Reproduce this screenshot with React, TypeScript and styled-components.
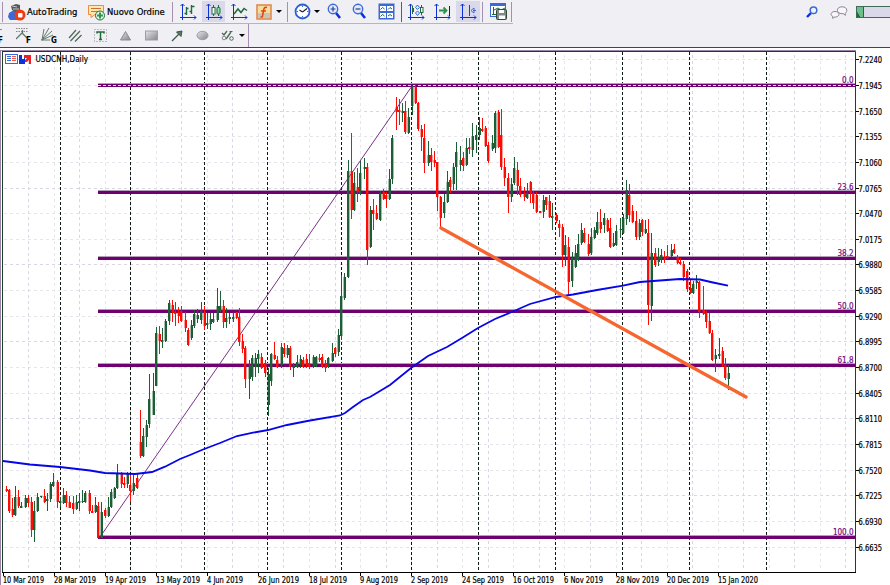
import React from "react";
import styled, { createGlobalStyle } from "styled-components";

const GlobalStyle = createGlobalStyle`
  html, body { margin: 0; padding: 0; overflow: hidden; }
  * { box-sizing: border-box; }
`;

const FONT = '"DejaVu Sans Condensed", "DejaVu Sans", "Liberation Sans", sans-serif';

const Terminal = styled.div`
  width: 890px;
  height: 585px;
  display: flex;
  flex-direction: column;
  background: #f0eff3;
  font-family: ${FONT};
  color: #000;
  overflow: hidden;
`;

const TopBar = styled.header`
  height: 24px;
  display: flex;
  justify-content: space-between;
`;

const ToolGroup = styled.div<{ $w: number }>`
  width: ${(p) => p.$w}px;
  height: 24px;
  display: flex;
  align-items: center;
  border-bottom: 1px solid #b9b3bd;
`;

const DrawBar = styled.div`
  height: 23px;
  width: 249px;
  display: flex;
  align-items: center;
  border-right: 1px solid #a58fb0;
`;

const Slot = styled.div<{ $w: number; $ml?: number; $active?: boolean }>`
  width: ${(p) => p.$w}px;
  height: ${(p) => (p.$active ? 21 : 22)}px;
  margin-left: ${(p) => p.$ml ?? 0}px;
  flex: none;
  display: flex;
  align-items: center;
  justify-content: center;
  background: ${(p) => (p.$active ? "#dad9ec" : "transparent")};
`;

const LabelButton = styled.div<{ $w: number; $size: number }>`
  width: ${(p) => p.$w}px;
  height: 22px;
  flex: none;
  display: flex;
  align-items: center;
  gap: 1px;
  padding-left: 2px;
  font-size: ${(p) => p.$size}px;
  line-height: 12px;
  white-space: nowrap;
  -webkit-text-stroke: 0.2px #000;
`;

const Separator = styled.i<{ $ml: number; $mr: number; $c?: string }>`
  width: 1px;
  height: 20px;
  flex: none;
  margin-left: ${(p) => p.$ml}px;
  margin-right: ${(p) => p.$mr}px;
  background: ${(p) => p.$c ?? "#a58fb0"};
`;

const Caret = styled.i<{ $ml: number; $mr: number }>`
  flex: none;
  width: 6px;
  height: 3px;
  margin-left: ${(p) => p.$ml}px;
  margin-right: ${(p) => p.$mr}px;
  border: 3px solid transparent;
  border-top-color: #000;
  border-bottom: 0;
`;

const StatusGroup = styled.div`
  display: flex;
  align-items: center;
  height: 24px;
`;

const Gauge = styled.div`
  width: 34px;
  height: 12px;
  margin-left: 8px;
  border: 1px solid #3d6b57;
  border-right: 0;
  background: #dad9ea;
  display: flex;
`;

const GaugeFill = styled.div`
  width: 7px;
  background: linear-gradient(60deg, #1f6b3c 0 25%, #6cbf88 30%);
  border-right: 1px solid #1f6b3c;
`;

const ChartPane = styled.main`
  height: 538px;
  border-top: 1px solid #1f5a34;
  background: #fff;
`;

const ChartSvg = styled.svg`
  display: block;
  font-family: ${FONT};
`;

const AxisText = styled.text`
  font-size: 8px;
  fill: #000;
  stroke: #000;
  stroke-width: 0.2px;
`;

const LevelText = styled.text`
  font-size: 8px;
  fill: #760a7c;
  stroke: #760a7c;
  stroke-width: 0.2px;
  text-anchor: end;
`;

const Icon = styled.svg`
  display: block;
  flex: none;
`;

const B = "#0a32d8";
const L = "#3a6ad8";
const G = "#1f6b3c";

const Axes = () => (
  <path d="M3.5 1v16M1 14.5h16M1.5 3l2-2 2 2M15 12.5l2 2-2 2" fill="none" stroke={B} />
);

const AutoIcon = () => (
  <Icon width="18" height="18" viewBox="0 0 18 18">
    <path d="M1 10l5-3 6 2 1 8H2L0 14z" fill={L} />
    <path d="M3 3l5-2 4 1v6l-4 1-4-2z" fill="#55585a" />
    <path d="M4 3l5 1M5 6h6" stroke="#c8c8c8" />
    <circle cx="12" cy="12" r="5.5" fill="#f23a12" />
    <rect x="10" y="10" width="4.5" height="4.5" rx="1" fill="#fff" />
  </Icon>
);
const OrderIcon = () => (
  <Icon width="18" height="18" viewBox="0 0 18 18">
    <path d="M.5 2.5h15v9H7l-4 3v-3H.5z" fill="#ffe7b0" stroke="#f08a3c" />
    <path d="M3 5.5h10M3 8.5h9" stroke="#c8742c" />
    <circle cx="12" cy="12.5" r="4.5" fill="#e6f5e8" stroke={G} />
    <path d="M12 9.5v6M9 12.5h6" stroke="#2c9a4a" strokeWidth="2" />
  </Icon>
);
const BarsIcon = () => (
  <Icon width="18" height="18" viewBox="0 0 18 18">
    <Axes />
    <path d="M7.5 4v8M5.5 10.5h2M7.5 5.5h2M12.5 2v9M10.5 8.5h2M12.5 3.5h3" stroke={G} strokeWidth="1.4" fill="none" />
  </Icon>
);
const CandlesIcon = () => (
  <Icon width="18" height="18" viewBox="0 0 18 18">
    <Axes />
    <path d="M8.5 2v11M13.5 2v11" stroke={G} />
    <rect x="7" y="4.5" width="3" height="6.5" fill="#fff" stroke={G} />
    <rect x="12" y="4.5" width="3" height="6.5" rx="1" fill="#8fe0a6" stroke={G} />
  </Icon>
);
const LineIcon = () => (
  <Icon width="18" height="18" viewBox="0 0 18 18">
    <Axes />
    <path d="M4 11l4-5 3 3.5 3-4 3 2" stroke={G} strokeWidth="1.5" fill="none" />
  </Icon>
);
const FunctionIcon = () => (
  <Icon width="16" height="16" viewBox="0 0 16 16">
    <rect x="1" y="1" width="14" height="14" fill="#f4dda0" stroke="#e08a50" strokeWidth="1.6" />
    <path d="M2 9h12v5H2z" fill="#c8c4bc" />
    <path d="M11 3.5c-2-.8-3 .4-3.3 2.5L6.5 12c-.3 1-1.2 1.3-2 1M5 7h5" stroke="#e4430c" strokeWidth="1.5" fill="none" />
  </Icon>
);
const ClockIcon = () => (
  <Icon width="17" height="17" viewBox="0 0 17 17">
    <circle cx="8.5" cy="8.5" r="7" fill="#fff" stroke="#2f5fd4" strokeWidth="1.8" />
    <path d="M8.5 9L13 5.5M8.5 9l-3-2" stroke="#222" strokeWidth="1.2" />
    <path d="M8.5 2.5v1.5M8.5 13v1.5M2.5 8.5H4M13 8.5h1.5" stroke={L} />
  </Icon>
);
const ZoomIcon = ({ plus }: { plus?: boolean }) => (
  <Icon width="15" height="17" viewBox="0 0 15 17">
    <path d="M9 10l4 5" stroke={B} strokeWidth="2.6" />
    <circle cx="6" cy="6" r="4.7" fill="#e3e9fb" stroke={L} strokeWidth="1.4" />
    <path d={plus ? "M3.5 6h5M6 3.5v5" : "M3.5 6h5"} stroke="#27408f" strokeWidth="1.2" />
  </Icon>
);
const TileIcon = () => (
  <Icon width="17" height="17" viewBox="0 0 17 17">
    <rect x=".5" y=".5" width="16" height="16" fill={L} />
    <path d="M2 3h6v5H2zM9 3h6v5H9zM2 10h6v5H2zM9 10h6v5H9z" fill="#fff" />
    <path d="M2.5 6.5l2-2 2 1.5M10 6.5l2-2 2 1.5M2.5 13.5l2-2 2 1.5M10 13l2-1.5 2 1.5" stroke={G} fill="none" />
  </Icon>
);
const ShiftIcon = ({ kind }: { kind: "scale" | "scroll" | "shift" }) => (
  <Icon width="18" height="18" viewBox="0 0 18 18">
    <Axes />
    {kind === "scale" && (
      <>
        <path d="M5.5 3v8M14.5 2v10" stroke={G} />
        <rect x="5" y="5" width="2" height="4" fill={G} />
        <rect x="13.5" y="4.5" width="2.5" height="5" fill="#fff" stroke={G} />
        <path d="M10.5 2l2 2.500-2 2-2-2zM10.500 8l2 2-2 2.500-2-2.500z" fill="#dfe8ff" stroke={L} />
      </>
    )}
    {kind === "scroll" && (
      <>
        <path d="M16.5 3v10" stroke="#222" />
        <path d="M6 7.5h6M10.5 4.5l3 3-3 3" stroke="#2f8f4c" strokeWidth="1.8" fill="none" />
      </>
    )}
    {kind === "shift" && (
      <>
        <path d="M10.5 2v11" stroke="#444" />
        <path d="M17 7.5h-3M15 5l-3 2.5 3 2.5z" stroke={L} fill="#e6eeff" />
      </>
    )}
  </Icon>
);
const TemplateIcon = () => (
  <Icon width="17" height="17" viewBox="0 0 17 17">
    <rect x=".5" y=".5" width="15" height="13" fill="#fff" stroke={L} />
    <path d="M0 1.5h16" stroke={L} strokeWidth="3" />
    <path d="M3.5 4v8M2 11.5h4M4 7l4-2 3 2 4-2" stroke={G} fill="none" />
    <rect x="6.5" y="6.5" width="10" height="10" rx="1" fill="#7f8b85" stroke="#33483c" />
    <path d="M9 7h5v3H9zM9 12.5h6V16H9z" fill="#fff" />
  </Icon>
);
const SearchIcon = () => (
  <Icon width="12" height="12" viewBox="0 0 12 12">
    <path d="M5 7L1 11" stroke={B} strokeWidth="2.4" />
    <circle cx="7.5" cy="4.2" r="3.3" fill="#eef2ff" stroke={L} strokeWidth="1.5" />
  </Icon>
);
const ChatIcon = () => (
  <Icon width="18" height="13" viewBox="0 0 18 13">
    <path d="M12 .8c3 0 4.8 1.4 4.8 3.6 0 1.4-.8 2.4-1.8 2.9l.5 2-2.3-1.6c-3.2.2-5.8-1-5.8-3.3C7.4 2.2 9.2.8 12 .8z" fill="#f8f8fa" stroke="#8f8496" />
    <path d="M5 5.5c2.4 0 4 1.2 4 2.7S7.4 11 5 11l-2.5 1.3.5-1.8C1.7 10 1 9.2 1 8.2c0-1.5 1.6-2.7 4-2.7z" fill="#f8f8fa" stroke="#8f8496" />
  </Icon>
);

const Letter = ({ x, y, children }: { x: number; y: number; children: string }) => (
  <text x={x} y={y} fontSize="8" fontWeight="bold" fill="#000">{children}</text>
);
const FanIcon = ({ kind }: { kind: "F" | "G" }) => (
  <Icon width="17" height="17" viewBox="0 0 17 17">
    {kind === "F" ? (
      <>
        <path d="M0 1.500h12M0 4.500h12" stroke="#8a8a8a" strokeDasharray="1.5 1" />
        <path d="M0 12l6-6 5 5M6.500 3v4" stroke="#607a6c" strokeWidth="1.3" fill="none" />
      </>
    ) : (
      <path d="M1 13L3 2M1 13L8 1M1 13l10-9M1 13l11-5M0 13h9" stroke="#607a6c" />
    )}
    <Letter x={10} y={16}>{kind}</Letter>
  </Icon>
);
const ChannelIcon = () => (
  <Icon width="14" height="13" viewBox="0 0 14 13">
    <path d="M1 9l7-8M2.5 12L12 2M7 12.5L13.5 6" stroke="#4f6b5a" strokeWidth="1.3" />
  </Icon>
);
const TextIcon = () => (
  <Icon width="13" height="13" viewBox="0 0 13 13">
    <rect x=".5" y=".5" width="12" height="12" fill="none" stroke="#8a8a8a" strokeDasharray="1 2" />
    <path d="M3 4.500V3h7v1.500M6.500 3v7M5 10.500h3" stroke={G} strokeWidth="1.5" fill="none" />
  </Icon>
);
const ShapeIcon = ({ kind }: { kind: "triangle" | "rect" | "ellipse" }) => (
  <Icon width="13" height="11" viewBox="0 0 13 11">
    <defs>
      <linearGradient id={`metal-${kind}`} x1="0" y1="0" x2="1" y2="1">
        <stop offset="0" stopColor="#e6e6ea" />
        <stop offset="1" stopColor="#858589" />
      </linearGradient>
    </defs>
    {kind === "triangle" && <path d="M6.5 1.5l5 8.500h-10z" fill={`url(#metal-${kind})`} stroke="#8f8794" />}
    {kind === "rect" && <rect x=".5" y="1" width="12" height="9" fill={`url(#metal-${kind})`} stroke="#a199a8" />}
    {kind === "ellipse" && <ellipse cx="6.5" cy="5.5" rx="5.5" ry="4.2" fill={`url(#metal-${kind})`} stroke="#a199a8" />}
  </Icon>
);
const ArrowIcon = () => (
  <Icon width="12" height="12" viewBox="0 0 12 12">
    <path d="M1 11l7-7" stroke="#3e5548" strokeWidth="1.3" />
    <path d="M5.5 2L11 1l-1 5.500z" fill="#5b7466" stroke="#3e5548" />
  </Icon>
);
const SymbolsIcon = () => (
  <Icon width="13" height="13" viewBox="0 0 13 13">
    <path d="M1 4l2 2 3-4M5 10l5-7" stroke="#4f6b5a" strokeWidth="1.4" fill="none" />
    <circle cx="3" cy="9" r="1.8" fill="none" stroke="#888" />
    <circle cx="10.5" cy="9.500" r="1.8" fill="none" stroke="#4f6b5a" />
    <path d="M8.500 2.500h3" stroke="#4f6b5a" />
  </Icon>
);

/* Each bar: [high, body top, body bottom, low, 1 = bullish / 0 = bearish] in pane pixels. */
type Bar = [number, number, number, number, 0 | 1];
const BARS: Bar[] = [
  [486,489,491,492,0],[489,490,511,513,0],[498,509,515,517,0],[486,497,515,516,1],[490,497,506,508,0],
  [502,506,508,508,1],[495,498,507,508,1],[495,498,503,507,0],[497,502,530,537,0],[501,511,530,542,1],
  [493,497,511,512,1],[496,496,497,498,1],[489,496,502,503,0],[493,499,501,511,1],[482,484,499,502,1],
  [473,482,486,487,1],[480,482,502,508,0],[497,501,503,507,1],[488,495,503,504,1],[491,495,503,507,0],
  [496,502,508,508,0],[496,503,509,514,0],[495,502,509,510,1],[493,501,503,511,1],[490,501,502,503,1],
  [491,493,502,503,1],[490,493,511,514,0],[505,511,513,513,0],[497,505,512,513,1],[502,506,538,538,0],
  [502,512,538,538,1],[508,510,516,518,0],[497,507,516,517,1],[489,492,507,508,1],[487,488,498,499,1],
  [464,473,488,489,1],[472,473,484,488,0],[477,483,485,488,0],[472,474,484,488,1],[475,485,491,502,0],
  [475,483,491,495,1],[473,478,488,489,0],[410,442,456,458,0],[428,436,456,457,1],[420,425,437,447,1],
  [374,399,424,428,1],[373,391,415,415,1],[327,333,386,386,1],[326,334,341,354,0],[328,340,342,348,1],
  [319,321,341,342,1],[300,303,321,325,1],[300,305,312,322,0],[302,312,314,326,0],[307,313,316,323,0],
  [306,311,321,322,0],[312,320,328,332,0],[328,330,345,346,0],[320,325,338,340,1],[310,314,326,328,1],
  [309,315,319,323,1],[302,311,320,324,1],[306,312,326,330,0],[313,323,325,329,1],[313,319,324,330,1],
  [313,319,322,323,1],[288,306,320,322,1],[291,306,311,312,1],[300,306,322,328,0],[308,318,322,328,1],
  [313,317,319,324,1],[312,317,319,322,1],[312,312,318,319,0],[308,317,342,346,0],[334,341,349,353,0],
  [346,348,379,388,0],[360,365,379,399,1],[355,358,377,381,1],[353,358,367,377,1],[350,354,359,373,1],
  [353,357,368,369,0],[360,363,373,377,0],[368,374,405,416,1],[353,354,381,386,1],[342,355,359,360,0],
  [356,360,367,368,0],[343,347,365,368,1],[343,348,354,357,0],[345,348,355,358,1],[346,348,367,370,0],
  [363,365,368,377,1],[355,362,367,368,1],[355,359,365,368,1],[357,360,367,368,0],[354,359,365,368,0],
  [354,363,367,369,0],[355,357,367,368,1],[356,357,366,367,1],[354,358,360,362,0],[354,357,367,368,0],
  [360,363,368,372,0],[357,358,367,368,1],[343,353,361,362,1],[347,348,354,357,0],[329,335,352,356,1],
  [275,296,336,340,1],[273,277,298,300,1],[160,171,277,278,1],[133,171,210,219,0],[172,183,210,211,1],
  [168,187,192,202,0],[161,173,194,195,1],[158,167,169,179,1],[163,167,250,265,0],[206,210,247,248,1],
  [199,210,214,230,0],[205,213,219,220,0],[191,193,220,221,1],[189,192,199,200,0],[192,195,199,208,0],
  [169,179,199,200,1],[135,138,179,184,1],[97,107,112,130,0],[99,110,112,125,0],[103,111,113,122,1],
  [101,111,132,134,0],[108,117,133,134,1],[86,87,106,115,1],[85,87,103,104,0],[102,103,129,131,0],
  [125,129,137,151,0],[124,138,163,173,0],[141,155,163,166,1],[148,155,162,171,0],[151,160,163,167,0],
  [162,162,197,211,0],[196,197,218,228,0],[194,202,213,218,1],[171,182,202,203,1],[177,180,187,193,0],
  [163,167,184,190,1],[142,152,167,190,1],[146,160,165,171,1],[152,158,166,171,0],[138,148,165,166,1],
  [138,147,149,154,0],[123,136,150,157,1],[125,135,140,153,1],[117,128,135,140,1],[118,129,131,132,0],
  [126,128,146,147,0],[142,145,161,163,0],[135,143,149,151,1],[111,113,148,153,1],[110,112,147,148,0],
  [109,135,167,170,0],[158,167,178,186,0],[173,178,197,213,0],[178,184,197,202,1],[157,168,183,185,1],
  [162,170,186,195,0],[178,186,195,197,0],[187,193,197,201,0],[183,193,198,199,1],[181,182,193,203,0],
  [191,193,203,209,0],[192,195,212,213,0],[211,211,213,213,0],[195,200,212,218,1],[197,197,205,210,0],
  [195,201,217,218,0],[203,216,218,230,1],[213,215,221,223,0],[220,224,228,237,0],[224,227,255,267,0],
  [235,245,255,266,1],[237,247,282,295,0],[252,258,281,287,1],[245,253,267,268,1],[234,244,260,261,1],
  [223,230,243,245,1],[228,233,242,243,0],[234,244,254,256,0],[228,237,253,255,1],[227,230,238,239,1],
  [212,222,233,235,1],[209,222,229,233,0],[213,218,225,233,1],[218,220,231,232,0],[218,228,247,248,0],
  [233,243,246,247,1],[225,231,245,246,1],[218,229,230,238,1],[214,218,233,234,1],[180,190,219,225,1],
  [184,195,215,222,0],[205,211,222,223,0],[211,221,237,240,0],[219,223,237,240,1],[219,220,232,236,0],
  [220,229,233,234,1],[219,233,305,325,0],[233,253,306,321,1],[248,253,265,267,0],[248,257,262,266,1],
  [249,255,259,263,1],[251,258,260,263,0],[245,256,258,259,0],[244,250,256,257,1],[244,249,253,254,0],
  [255,257,263,264,0],[258,262,264,265,0],[261,264,277,281,0],[269,271,289,292,0],[279,288,293,294,0],
  [281,284,293,294,1],[275,281,283,289,1],[281,282,312,318,0],[286,310,314,315,0],[311,313,322,328,0],
  [313,321,333,334,0],[330,333,360,361,0],[349,355,359,372,1],[338,354,356,359,1],[347,351,365,367,0],
  [358,365,378,380,0],[365,373,379,390,1],
];

const AVERAGE =
  "3,461 30,464.5 60,467 90,470.5 105,473 135,474 152,472 165,466.7 180,459 190,455 203,449.5 220,443 237,436 253,432.7 268,430 287,425 310,420.5 340,415.5 345,413 353,407 363,400 370,397 390,385 411,368 428,356 447,347 462,338 478,328 495,319 514,311 530,304 556,297 573,294.5 597,290 623,285.7 640,282 653,281 680,279 700,279.5 713,282.5 728,285.7";

const PRICES = [
  "7.2240","7.1945","7.1650","7.1355","7.1060","7.0765","7.0470","7.0175","6.9880","6.9585",
  "6.9290","6.8995","6.8700","6.8405","6.8110","6.7815","6.7520","6.7225","6.6930","6.6635",
];
const DATES: [string, number][] = [
  ["10 Mar 2019",41],["28 Mar 2019",42],["19 Apr 2019",41],["13 May 2019",44],["4 Jun 2019",36],
  ["26 Jun 2019",41],["18 Jul 2019",38],["9 Aug 2019",38],["2 Sep 2019",37],["24 Sep 2019",42],
  ["16 Oct 2019",41],["6 Nov 2019",39],["28 Nov 2019",43],["20 Dec 2019",42],["15 Jan 2020",40],
];
const PERIODS = [60, 130, 204, 267, 341, 411, 478, 555, 622, 689, 766];
const LEVELS: [string, number][] = [
  ["0.0",85],["23.6",192],["38.2",258],["50.0",311],["61.8",365],["100.0",537],
];

const priceY = (i: number) => Math.round(59.2 + i * 25.66) + 0.5;
const gridX = (i: number) => Math.round(2.5 + i * 25.545) + 0.5;

const Grid = () => (
  <g>
    {PRICES.map((p, i) => (
      <path key={p} d={`M4 ${priceY(i)}H854`} stroke={i % 3 === 2 ? "#d9d7e6" : "#e6e5ec"} strokeDasharray="3 3" />
    ))}
    {Array.from({ length: 33 }, (_, i) => i + 1).map((i) => (
      <path key={i} d={`M${gridX(i)} 55V571`} stroke={i % 2 ? "#d9d7e6" : "#e6e6ec"} strokeDasharray="3 3" />
    ))}
    {PERIODS.map((x) => (
      <path key={x} d={`M${x + 0.5} 52V571`} stroke="#0c1a12" strokeDasharray="3 2" />
    ))}
  </g>
);

const Levels = () => (
  <g>
    {LEVELS.map(([label, y]) => (
      <g key={label}>
        <path d={`M98 ${y - 1.5}H855`} stroke="#b49fba" />
        <path d={`M98 ${y + 0.5}H855`} stroke="#700070" strokeWidth="3" />
        {label === "0.0" && <path d={`M98 ${y + 0.5}H855`} stroke="#f0dff0" strokeDasharray="3 2" />}
        <LevelText x="853.5" y={y - 2}>{label}</LevelText>
      </g>
    ))}
  </g>
);

const Candles = () => (
  <g>
    {BARS.map(([hi, top, bottom, lo, up], i) => {
      const x = Math.round(5.5 + i * 3.198);
      return (
        <g key={i} fill={up ? "#1d5e36" : "#fb0d05"}>
          <rect x={x} y={hi} width="1" height={Math.max(1, lo - hi)} />
          <rect x={x - (i % 2 ? 1 : 0.4)} y={top} width="2.4" height={Math.max(1, bottom - top)} />
        </g>
      );
    })}
  </g>
);

const Chart = () => (
  <ChartSvg width="890" height="537" viewBox="0 48 890 537">
    <path d="M0 50.5H856M.5 50V585" stroke="#9c84a6" fill="none" />
    <Grid />
    <Levels />
    <path d="M100 537L412 86" stroke="#6a1a78" strokeWidth=".9" />
    <Candles />
    <polyline points={AVERAGE} fill="none" stroke="#0606e8" strokeWidth="1.8" />
    <path d="M441 228L746 397" stroke="#f5672f" strokeWidth="3.4" strokeLinecap="round" />
    <path d="M2 51.5H855.5V573M2.5 51V573" fill="none" stroke="#1c3f2b" />
    <path d="M2 572.5H856" stroke="#000" />
    {PRICES.map((p, i) => (
      <g key={p}>
        <path d={`M856 ${priceY(i)}h3`} stroke="#000" />
        <AxisText x="858.5" y={priceY(i) + 3} textLength="23.5" lengthAdjust="spacingAndGlyphs">{p}</AxisText>
      </g>
    ))}
    {DATES.map(([d, w], i) => (
      <g key={d}>
        <path d={`M${gridX(i * 2)} 573v3`} stroke="#000" />
        <AxisText x={gridX(i * 2) - 0.5} y="582.5" textLength={w} lengthAdjust="spacingAndGlyphs">{d}</AxisText>
      </g>
    ))}
    <rect x="5.5" y="54.5" width="12" height="9" fill="#fff" stroke={L} />
    <path d="M7 56.5h4M7 58.5h4M7 60.5h4" stroke={L} />
    <path d="M12 56.5h4M12 58.5h4M12 60.5h4" stroke="#ef5a50" />
    <path d="M19 55h3v4h2v-1h1v6h-6z" fill={B} />
    <path d="M24 55h7v9h-2v-4l-2 2h-2v-2l2-2h-3z" fill="#f02020" />
    <AxisText x="35.5" y="62" textLength="52.5" lengthAdjust="spacingAndGlyphs">USDCNH,Daily</AxisText>
  </ChartSvg>
);

export default function App() {
  return (
    <>
      <GlobalStyle />
      <Terminal>
        <TopBar>
          <ToolGroup $w={513}>
            <Separator $ml={2} $mr={3} />
            <LabelButton $w={80} $size={9.4}><AutoIcon />AutoTrading</LabelButton>
            <LabelButton $w={82} $size={9.4}><OrderIcon />Nuovo Ordine</LabelButton>
            <Separator $ml={4} $mr={3} />
            <Slot $w={23}><BarsIcon /></Slot>
            <Slot $w={23} $ml={3} $active><CandlesIcon /></Slot>
            <Slot $w={21} $ml={3}><LineIcon /></Slot>
            <Slot $w={20} $ml={5}><FunctionIcon /></Slot>
            <Caret $ml={2} $mr={5} />
            <Separator $ml={0} $mr={3} />
            <Slot $w={22}><ClockIcon /></Slot>
            <Caret $ml={1} $mr={4} />
            <Slot $w={21}><ZoomIcon plus /></Slot>
            <Slot $w={21} $ml={4}><ZoomIcon /></Slot>
            <Slot $w={22} $ml={5}><TileIcon /></Slot>
            <Separator $ml={4} $mr={3} $c="#4c6a58" />
            <Slot $w={22}><ShiftIcon kind="scale" /></Slot>
            <Slot $w={22} $ml={4}><ShiftIcon kind="scroll" /></Slot>
            <Slot $w={24} $ml={3} $active><ShiftIcon kind="shift" /></Slot>
            <Separator $ml={2} $mr={4} />
            <Slot $w={22}><TemplateIcon /></Slot>
            <Separator $ml={2} $mr={1} />
          </ToolGroup>
          <StatusGroup>
            <SearchIcon />
            <Slot $w={18} $ml={12}><ChatIcon /></Slot>
            <Gauge><GaugeFill /></Gauge>
          </StatusGroup>
        </TopBar>
        <DrawBar>
          <Slot $w={4}>
            <Icon width="4" height="17" viewBox="0 0 4 17">
              <path d="M0 2.5h2" stroke="#8a8a8a" />
              <Letter x={-2} y={16}>F</Letter>
            </Icon>
          </Slot>
          <Slot $w={17} $ml={12}><FanIcon kind="F" /></Slot>
          <Slot $w={17} $ml={8}><FanIcon kind="G" /></Slot>
          <Slot $w={15} $ml={9}><ChannelIcon /></Slot>
          <Slot $w={14} $ml={11}><TextIcon /></Slot>
          <Slot $w={14} $ml={11}><ShapeIcon kind="triangle" /></Slot>
          <Slot $w={14} $ml={12}><ShapeIcon kind="rect" /></Slot>
          <Slot $w={13} $ml={12}><ArrowIcon /></Slot>
          <Slot $w={14} $ml={12}><ShapeIcon kind="ellipse" /></Slot>
          <Slot $w={13} $ml={12}><SymbolsIcon /></Slot>
          <Caret $ml={5} $mr={3} />
        </DrawBar>
        <ChartPane>
          <Chart />
        </ChartPane>
      </Terminal>
    </>
  );
}
